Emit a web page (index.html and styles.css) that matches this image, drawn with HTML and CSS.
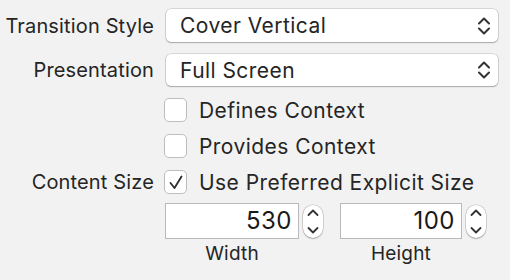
FILE: index.html
```html
<!DOCTYPE html>
<html lang="en">
<head>
    <meta charset="UTF-8">
    <title>Presentation Attributes</title>
    <link rel="stylesheet" href="styles.css">
</head>
<body>
    <div class="inspector">
        <div class="row row-popup">
            <label class="label">Transition Style</label>
            <div class="popup">
                <span>Cover Vertical</span>
                <svg class="popup-arrows" width="14" height="20" viewBox="0 0 14 20"><path d="M2 7.5 L7 2.5 L12 7.5 M2 12.5 L7 17.5 L12 12.5" fill="none" stroke="#333" stroke-width="2" stroke-linecap="round" stroke-linejoin="round"/></svg>
            </div>
        </div>
        <div class="row row-popup">
            <label class="label">Presentation</label>
            <div class="popup">
                <span>Full Screen</span>
                <svg class="popup-arrows" width="14" height="20" viewBox="0 0 14 20"><path d="M2 7.5 L7 2.5 L12 7.5 M2 12.5 L7 17.5 L12 12.5" fill="none" stroke="#333" stroke-width="2" stroke-linecap="round" stroke-linejoin="round"/></svg>
            </div>
        </div>
        <div class="row row-check">
            <span class="label"></span>
            <div class="check"><span class="box"></span>Defines Context</div>
        </div>
        <div class="row row-check">
            <span class="label"></span>
            <div class="check"><span class="box"></span>Provides Context</div>
        </div>
        <div class="row row-check">
            <label class="label">Content Size</label>
            <div class="check">
                <span class="box"><svg width="23" height="24" viewBox="0 0 23 24"><path d="M6.5 13 L10.5 18 L17.5 6.5" fill="none" stroke="#2b2b2b" stroke-width="1.8" stroke-linecap="round" stroke-linejoin="round"/></svg></span>
                Use Preferred Explicit Size
            </div>
        </div>
        <div class="row row-size">
            <span class="label"></span>
            <div class="size-grid">
                <div class="field">530</div>
                <div class="stepper"><svg width="20" height="33" viewBox="0 0 20 33"><path d="M5.5 10 L10 5.5 L14.5 10 M5.5 23 L10 27.5 L14.5 23" fill="none" stroke="#333" stroke-width="1.8" stroke-linecap="round" stroke-linejoin="round"/></svg></div>
                <div class="field">100</div>
                <div class="stepper"><svg width="20" height="33" viewBox="0 0 20 33"><path d="M5.5 10 L10 5.5 L14.5 10 M5.5 23 L10 27.5 L14.5 23" fill="none" stroke="#333" stroke-width="1.8" stroke-linecap="round" stroke-linejoin="round"/></svg></div>
                <div class="caption">Width</div>
                <div class="caption caption-2">Height</div>
            </div>
        </div>
    </div>
</body>
</html>
```

FILE: styles.css
```css
body { margin: 0; background: #f2f2f2; font-family: Inter, "Noto Sans", sans-serif; color: #252525; }
.inspector { padding-top: 9px; width: 510px; height: 280px; box-sizing: border-box; }
.row { display: flex; align-items: center; }
.label { width: 166px; flex: none; text-align: right; font-size: 20px; letter-spacing: 0.15px; padding-right: 12px; box-sizing: border-box; white-space: nowrap; }
.row-popup { height: 33px; margin-bottom: 12px; }
.row-popup + .row-popup { height: 32px; }
.popup { width: 332px; height: 100%; box-sizing: border-box; background: #fff; border-radius: 5px; box-shadow: 0 0 0 0.5px rgba(0,0,0,.22), 0 1px 1.5px rgba(0,0,0,.22); display: flex; align-items: center; justify-content: space-between; padding: 0 7px 0 14px; font-size: 21px; letter-spacing: 0.45px; }
.popup-arrows { display: block; }
.row-check { height: 24px; margin-bottom: 12px; }
.check { display: flex; align-items: center; font-size: 21px; letter-spacing: 0.45px; margin-left: -2px; }
.box { width: 23px; height: 24px; box-sizing: border-box; background: #fff; border: 1px solid #bdbdbd; border-radius: 5px; margin-right: 12px; display: flex; align-items: center; justify-content: center; overflow: hidden; }
.box svg { display: block; flex: none; }
.row-size { margin-top: -3px; align-items: flex-start; }
.size-grid { display: grid; grid-template-columns: 134px 20px 135px 20px; column-gap: 4px; align-items: center; margin-left: -1px; }
.field { grid-row: 1; height: 36px; box-sizing: border-box; background: #fff; border: 1px solid #b9b9b9; font-size: 24px; letter-spacing: 0.5px; text-align: right; padding-right: 6px; line-height: 34px; color: #1a1a1a; }
.field:nth-child(3) { margin-left: 13px; }
.stepper { grid-row: 1; height: 33px; box-sizing: border-box; background: #fff; border-radius: 10px; box-shadow: 0 0 0 0.5px rgba(0,0,0,.22), 0 1px 1.5px rgba(0,0,0,.22); }
.stepper svg { display: block; }
.caption { grid-row: 2; grid-column: 1; text-align: center; font-size: 19px; letter-spacing: 0.2px; margin-top: 3px; }
.caption-2 { grid-column: 3; margin-left: 13px; }
```
